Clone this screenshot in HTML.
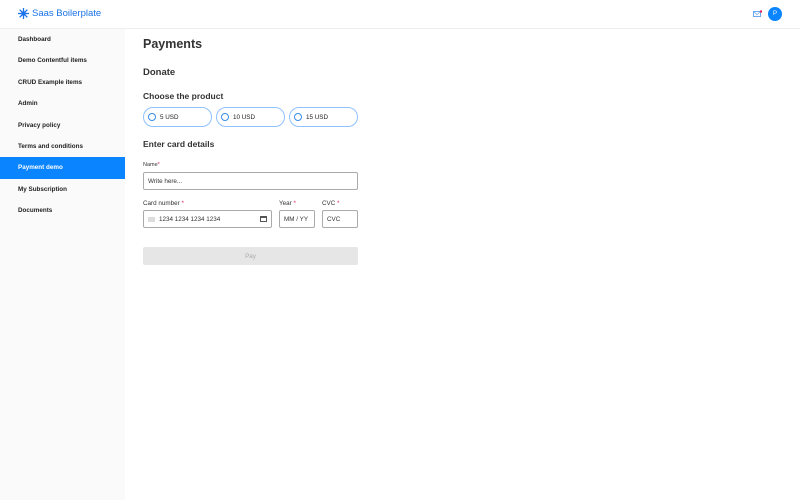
<!DOCTYPE html>
<html><head><style>
*{box-sizing:border-box;margin:0;padding:0}
body{width:800px;height:500px;font-family:"Liberation Sans",sans-serif;background:#fff;position:relative;overflow:hidden;color:#222}
.top{position:absolute;left:0;top:0;width:800px;height:29px;border-bottom:1px solid #eee;background:#fff}
.logo{position:absolute;left:18px;top:8px;font-size:9.5px;color:#1a73e8;display:flex;align-items:center;gap:3px}
.side{position:absolute;left:0;top:29px;width:125px;height:471px;background:#fafafa}
.side div{height:21.4px;line-height:21.4px;padding-left:18px;font-size:6.3px;font-weight:bold;color:#222}
.side .act{background:#0a84ff;color:#fff}
.a{position:absolute;white-space:nowrap}
.pill{position:absolute;top:107px;height:20px;width:69px;border:1.2px solid #8fc2ff;border-radius:10px;font-size:6.3px;display:flex;align-items:center;padding-left:4px;gap:4px}
.pill i{display:block;width:8px;height:8px;border:1px solid #3a8ee6;border-radius:50%}
.inp{position:absolute;border:1px solid #aaa;border-radius:2px;height:18px;font-size:6.3px;display:flex;align-items:center;padding-left:4px;color:#333}
.lbl{position:absolute;font-size:6.3px;color:#333}
.r{color:#e0245e}
</style></head><body>
<div class="top">
<div class="logo"><svg width="11" height="11" viewBox="0 0 12 12"><g stroke="#1a73e8" stroke-width="1.4"><line x1="6" y1="0" x2="6" y2="12"/><line x1="0" y1="6" x2="12" y2="6"/><line x1="1.8" y1="1.8" x2="10.2" y2="10.2"/><line x1="10.2" y1="1.8" x2="1.8" y2="10.2"/></g><circle cx="6" cy="6" r="2.5" fill="#1a73e8"/></svg>Saas Boilerplate</div>
<svg style="position:absolute;left:753px;top:10px" width="9" height="8" viewBox="0 0 9 8"><rect x="0.5" y="1.5" width="7" height="5" fill="none" stroke="#6aa8f0"/><path d="M.5 1.5l3.5 3 3.5-3" fill="none" stroke="#6aa8f0" stroke-width=".8"/><circle cx="8" cy="1.5" r="1.2" fill="#e0245e"/></svg>
<div style="position:absolute;left:768px;top:7px;width:14px;height:14px;border-radius:50%;background:#0a84ff;color:#fff;font-size:6px;display:flex;align-items:center;justify-content:center">P</div>
</div>
<div class="side">
<div>Dashboard</div><div>Demo Contentful items</div><div>CRUD Example items</div><div>Admin</div><div>Privacy policy</div><div>Terms and conditions</div><div class="act">Payment demo</div><div>My Subscription</div><div>Documents</div>
</div>
<div class="a" style="left:143px;top:37px;font-size:12.5px;font-weight:bold;color:#333">Payments</div>
<div class="a" style="left:143px;top:67px;font-size:9.5px;font-weight:bold;color:#333">Donate</div>
<div class="a" style="left:143px;top:91px;font-size:8.5px;font-weight:bold;color:#333">Choose the product</div>
<div class="pill" style="left:143px"><i></i>5 USD</div>
<div class="pill" style="left:216px"><i></i>10 USD</div>
<div class="pill" style="left:289px"><i></i>15 USD</div>
<div class="a" style="left:143px;top:139px;font-size:8.5px;font-weight:bold;color:#333">Enter card details</div>
<div class="lbl" style="left:143px;top:162px;font-size:5.5px">Name<span class="r">*</span></div>
<div class="inp" style="left:143px;top:172px;width:215px">Write here...</div>
<div class="lbl" style="left:143px;top:200px">Card number <span class="r">*</span></div>
<div class="inp" style="left:143px;top:210px;width:129px;padding-left:15px"><span style="position:absolute;left:4px;top:6px;width:7px;height:5px;background:#ddd"></span>1234 1234 1234 1234<span style="position:absolute;right:4px;top:5px;width:7px;height:6px;border:1px solid #555;border-top-width:2px"></span></div>
<div class="lbl" style="left:279px;top:200px">Year <span class="r">*</span></div>
<div class="inp" style="left:279px;top:210px;width:36px">MM / YY</div>
<div class="lbl" style="left:322px;top:200px">CVC <span class="r">*</span></div>
<div class="inp" style="left:322px;top:210px;width:36px">CVC</div>
<div class="a" style="left:143px;top:247px;width:215px;height:18px;background:#e6e6e6;border-radius:2px;font-size:6.3px;color:#aaa;display:flex;align-items:center;justify-content:center">Pay</div>
</body></html>
